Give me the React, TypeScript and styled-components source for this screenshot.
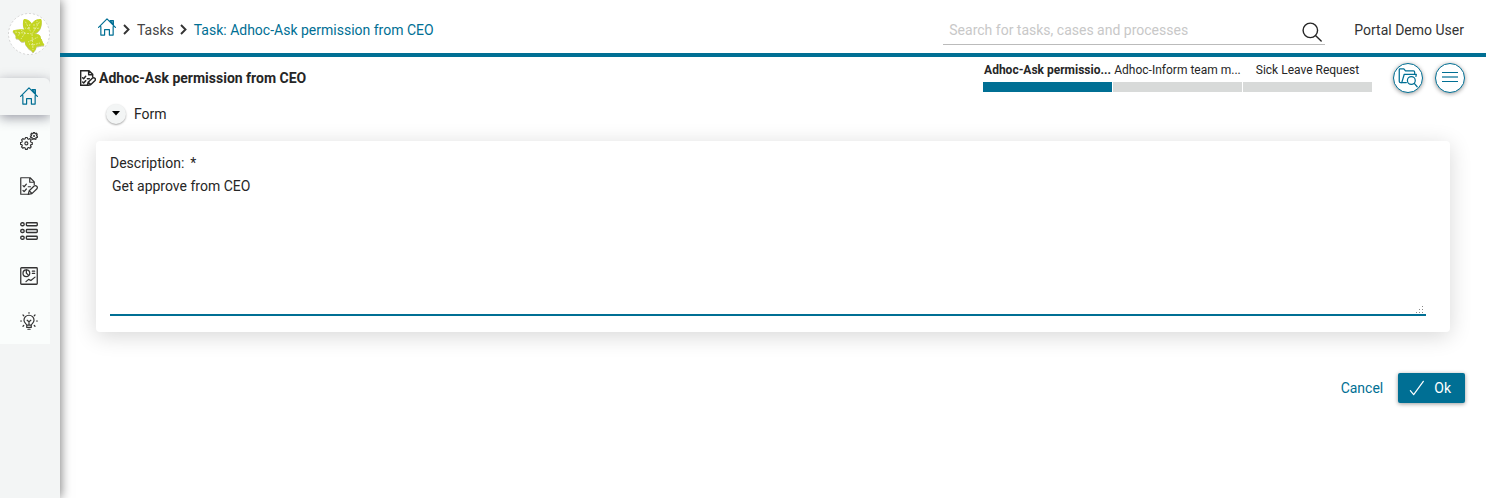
import React from "react";
import styled, { createGlobalStyle, css } from "styled-components";

const color = {
  primary: "#006f94",
  text: "#262626",
  soft: "#f3f5f5",
  menu: "#fafdfc",
  step: "#d8dad9",
};

const GlobalStyle = createGlobalStyle`
  *, *::before, *::after { box-sizing: border-box; }
  body {
    margin: 0;
    background: #fff;
    color: ${color.text};
    font: 14px/20px Roboto, "Liberation Sans", sans-serif;
  }
  button, input, textarea { font: inherit; color: inherit; }
`;

const Layout = styled.div`
  display: flex;
  min-height: 100vh;
`;

const Sidebar = styled.aside`
  flex: none;
  width: 60px;
  background: ${color.soft};
  box-shadow: 1px 0 10px rgba(0, 0, 0, 0.5);
`;

const LogoLink = styled.a`
  display: block;
  width: 42px;
  height: 42px;
  margin: 13px 8px 23px;
`;

const Menu = styled.nav`
  display: flex;
  flex-direction: column;
  width: 50px;
  background: ${color.menu};
  border-top-right-radius: 6px;
`;

const MenuLink = styled.a<{ $active?: boolean }>`
  display: flex;
  align-items: center;
  justify-content: flex-end;
  height: 45px;
  padding: 0 12px 2px 0;
  color: #333;
  ${({ $active }) =>
    $active &&
    css`
      height: 37px;
      margin-bottom: 4px;
      color: ${color.primary};
      background: ${color.soft};
      border-top-right-radius: 6px;
      box-shadow: 0 3px 12px rgba(60, 60, 80, 0.5);
      clip-path: inset(-16px 0 -16px 0);
    `}
`;

const Page = styled.div`
  flex: 1;
  min-width: 0;
  position: relative;
`;

const TopBar = styled.header`
  display: flex;
  align-items: center;
  height: 57px;
  padding: 7px 22px 0 38px;
  border-bottom: 4px solid ${color.primary};
`;

const Breadcrumb = styled.nav`
  display: flex;
  align-items: center;
  flex: 1;
  gap: 5px;
`;

const Crumb = styled.a<{ $current?: boolean }>`
  display: flex;
  color: ${({ $current }) => ($current ? color.primary : "#444")};
  text-decoration: none;
`;

const HomeCrumb = styled(Crumb)`
  color: ${color.primary};
  padding: 0 1px 6px 0;
`;

const SearchBox = styled.div`
  display: flex;
  align-items: center;
  width: 382px;
  height: 30px;
  margin: 0 29px 0 16px;
  padding: 0 3px 0 6px;
  border-bottom: 1px solid #bbb;
`;

const SearchInput = styled.input`
  flex: 1;
  min-width: 0;
  padding: 0;
  border: 0;
  outline: 0;
  background: transparent;
  &::placeholder {
    color: #c8c8c8;
    opacity: 1;
  }
`;

const PlainButton = styled.button`
  display: flex;
  padding: 0;
  border: 0;
  background: none;
  cursor: pointer;
`;

const SearchButton = styled(PlainButton)`
  padding-top: 4px;
`;

const UserButton = styled(PlainButton)`
  color: #333;
`;

const TaskBar = styled.div`
  display: flex;
  align-items: center;
  height: 42px;
  padding: 0 21px 0 20px;
`;

const TaskTitle = styled.h1`
  display: flex;
  align-items: center;
  flex: 1;
  gap: 3px;
  margin: 0;
  font-size: 14px;
  font-weight: 700;
`;

const Steps = styled.ol`
  display: grid;
  grid-template-columns: repeat(3, 129px);
  gap: 1px;
  margin: 0 21px 0 0;
  padding: 0 0 2px;
  list-style: none;
`;

const Step = styled.li<{ $active?: boolean }>`
  font-size: 12px;
  line-height: 16px;
  text-align: center;
  white-space: nowrap;
  font-weight: ${({ $active }) => ($active ? 700 : 400)};
  &::after {
    content: "";
    display: block;
    height: 10px;
    margin-top: 4px;
    background: ${({ $active }) => ($active ? color.primary : color.step)};
  }
`;

const RoundButton = styled.button`
  display: grid;
  place-items: center;
  width: 30px;
  height: 30px;
  padding: 0;
  color: ${color.primary};
  background: #fff;
  border: 1px solid ${color.primary};
  border-radius: 50%;
  box-shadow: 0 1px 4px rgba(0, 0, 0, 0.4);
  & + & {
    margin-left: 12px;
  }
`;

const FormSection = styled.form`
  padding: 4px 21px 20px 36px;
`;

const Legend = styled.div`
  display: flex;
  align-items: center;
  gap: 8px;
  padding-left: 10px;
  height: 22px;
`;

const Toggle = styled.button`
  display: grid;
  place-items: center;
  width: 20px;
  height: 20px;
  padding: 0 0 1px;
  background: ${color.soft};
  border: 0;
  border-radius: 50%;
  box-shadow: 0 1px 2px rgba(0, 0, 0, 0.35);
`;

const Card = styled.div`
  margin: 16px 15px 41px 0;
  padding: 12px 24px 16px 14px;
  background: #fff;
  border-radius: 4px;
  box-shadow: 0 4px 22px rgba(0, 0, 0, 0.16);
`;

const Label = styled.label`
  display: block;
`;

const Required = styled.span`
  margin-left: 6px;
`;

const AreaWrap = styled.div`
  position: relative;
  margin-top: 2px;
`;

const TextArea = styled.textarea`
  display: block;
  width: 100%;
  height: 141px;
  padding: 1px 2px;
  resize: none;
  border: 0;
  border-bottom: 2px solid ${color.primary};
  outline: 0;
  background: transparent;
`;

const Grip = styled.svg`
  position: absolute;
  right: 3px;
  bottom: 2px;
  fill: #888;
  pointer-events: none;
`;

const Actions = styled.div`
  display: flex;
  align-items: center;
  justify-content: flex-end;
  gap: 15px;
`;

const CancelLink = styled.a`
  color: ${color.primary};
  text-decoration: none;
`;

const OkButton = styled.button`
  display: flex;
  align-items: center;
  gap: 9px;
  height: 30px;
  padding: 0 14px 0 11px;
  color: #fff;
  background: ${color.primary};
  border: 0;
  border-radius: 2px;
  box-shadow: 0 1px 4px rgba(0, 0, 0, 0.4);
`;

const LineIcon = styled.svg.attrs({ viewBox: "0 0 24 24", "aria-hidden": true })<{ $weight?: number }>`
  flex: none;
  fill: none;
  stroke: currentColor;
  stroke-width: ${({ $weight }) => $weight ?? 1.6};
  stroke-linecap: round;
  stroke-linejoin: round;
`;

type IconProps = { size?: number; weight?: number };

const HomeIcon = ({ size = 18 }: IconProps) => (
  <LineIcon width={size} height={size}>
    <path d="M.8 12.400 12 1.200l11.200 11.200M3.800 11.500v11.300h5v-7.300h6.400v7.300h5V11.500" />
    <path d="M16 3.500h4.500V9z" fill="currentColor" fillOpacity="0.500" />
  </LineIcon>
);

const TaskIcon = ({ size = 18, weight }: IconProps) => (
  <LineIcon width={size} height={size} $weight={weight}>
    <path d="M10 23H1V1h12.500l5.500 5.500V10M13 1v6h6M4 11.500l1.500 1.500L8.500 9.500M4 18l1.500 1.500L8.500 16M11 13h3" />
    <path d="m12.300 18.300 6.500-6.300c2.500-1.500 5.500 1 3.800 3.700l-6.700 6.500-5 1zM12.300 18.300l3.500 3.500" />
  </LineIcon>
);

const cog = (cx: number, cy: number, inner: number, outer: number, teeth: number) => {
  const points: string[] = [];
  for (let i = 0; i < teeth; i++) {
    [[-0.32, inner], [-0.2, outer], [0.2, outer], [0.32, inner]].forEach(([offset, r]) => {
      const a = ((i + offset) * 2 * Math.PI) / teeth;
      points.push(`${(cx + r * Math.sin(a)).toFixed(2)} ${(cy - r * Math.cos(a)).toFixed(2)}`);
    });
  }
  return `M${points.join("L")}Z`;
};

const GearsIcon = () => (
  <LineIcon width={18} height={18} $weight={1.5}>
    <path d={cog(8.5, 15.2, 6.3, 8, 8)} />
    <circle cx="8.500" cy="15.200" r="2" />
    <path d={cog(18.7, 5.3, 3.5, 4.9, 7)} />
    <circle cx="18.700" cy="5.300" r="0.600" />
  </LineIcon>
);

const ListIcon = () => (
  <LineIcon width={18} height={18} $weight={1.8}>
    {[3, 12, 21].map((y) => (
      <React.Fragment key={y}>
        <rect x="1" y={y - 2} width="4.500" height="4" rx="1.800" />
        <rect x="8.500" y={y - 2} width="14.500" height="4" rx="1" />
      </React.Fragment>
    ))}
  </LineIcon>
);

const DashboardIcon = () => (
  <LineIcon width={18} height={18} $weight={1.7}>
    <rect x="1" y="1" width="22" height="22" rx="1" />
    <circle cx="8.500" cy="8.200" r="4.500" />
    <path d="M8.500 4v4.200l3 3M16.500 5.500h3M16.500 8.500h3M8 19.500l3.500-3 3 1.500 5.500-4.500" />
  </LineIcon>
);

const BulbIcon = () => (
  <LineIcon width={18} height={18}>
    <path d="M9 17.500c0-1.400-3.700-2.500-3.700-6.500a6.700 6.700 0 0 1 13.400 0c0 4-3.700 5.100-3.700 6.500zM9 17.500v3h6v-3M10.500 23h3M12 17v-4M9.500 11l2.500 2 2.500-2M12 .8v.7M4 4l1 1M20 4l-1 1M.8 12h1.200M22 12h1.200M4 19l1-1M20 19l-1-1" />
  </LineIcon>
);

const SearchIcon = () => (
  <LineIcon width={20} height={20} $weight={1.7}>
    <circle cx="10" cy="10" r="8.700" />
    <path d="m16.500 16.500 6.500 6.300" />
  </LineIcon>
);

const CaseIcon = () => (
  <LineIcon width={20} height={20} $weight={1.5}>
    <path d="M10 17.500H3C2 17.500 1.500 17 1.500 16V2c0-.6.400-1 1-1H7l2 2.500h9.500c1 0 1.500.5 1.500 1.500v1.500" />
    <path d="M4.500 17.500 7.500 7.500H22l-.5 2.500" />
    <circle cx="16" cy="15" r="4.700" />
    <path d="m19.500 18.500 3.500 4" />
  </LineIcon>
);

const MenuIcon = () => (
  <svg width="16" height="12" viewBox="0 0 16 12" fill="currentColor" aria-hidden="true">
    <rect y="0" width="16" height="1" />
    <rect y="4" width="16" height="2" opacity="0.600" />
    <rect y="9" width="16" height="1" />
  </svg>
);

const Chevron = () => (
  <svg width="10" height="14" viewBox="0 0 10 14" fill="none" stroke="#333" strokeWidth="1.900" aria-hidden="true">
    <path d="m2 2 4.500 4.500L2 11" />
  </svg>
);

const leaves = [
  { d: "M24 21C17 20 14 13 16 6.500c7 0 10 6 8 14.500Z", vein: "M24 21 17 8M21 16l-4-1M21 16l1-5" },
  { d: "M24 21C21 11 26 6 33 6.500c1 8-2 13-9 14.500Z", vein: "M24 21 32 8M26 16v-6M26 16l6-1M29 12V8" },
  { d: "M24 21C20 28 15 29 13 28 11 26 11 25 8 25c1-3-1-4-3-7 7-2 15-2 19 3Z", vein: "M24 21 7 19M17 20l-4 6M17 20l-4-3M12 20l-2 3" },
  { d: "M24 21c6 0 9 1 8 4 2 1 1 3 4 7-4 0-5 1-8 1 0 2-1 4-3 6-1-3-5-3-5-5-5-4-2-9 4-13Z", vein: "m24 21 1 16M24 27l-4 2M24 27l6-3M25 32l-4-1M25 32l7-2" },
];

const LeafLogo = () => (
  <svg width="42" height="42" viewBox="0 0 42 42" role="img" aria-label="Portal">
    <circle cx="21" cy="21" r="20.500" fill="#fff" stroke="#d5d5d5" strokeDasharray="2 2" />
    <g strokeLinejoin="round">
      {leaves.map(({ d }) => (
        <path key={d} d={d} fill="#c9ca9c" stroke="#c9ca9c" transform="translate(0 1)" />
      ))}
      {leaves.map(({ d, vein }) => (
        <React.Fragment key={d}>
          <path d={d} fill="#c3d520" stroke="#c3d520" />
          <path d={vein} fill="none" stroke="#e9efa5" strokeWidth="0.800" strokeDasharray="2 1" />
        </React.Fragment>
      ))}
    </g>
  </svg>
);

const menu = [
  { name: "Home", Icon: HomeIcon },
  { name: "Processes", Icon: GearsIcon },
  { name: "Tasks", Icon: TaskIcon },
  { name: "Cases", Icon: ListIcon },
  { name: "Dashboard", Icon: DashboardIcon },
  { name: "Ideas", Icon: BulbIcon },
];

const steps = ["Adhoc-Ask permissio...", "Adhoc-Inform team m...", "Sick Leave Request"];

export default function App() {
  return (
    <>
      <GlobalStyle />
      <Layout>
        <Sidebar>
          <LogoLink href="#">
            <LeafLogo />
          </LogoLink>
          <Menu aria-label="Main">
            {menu.map(({ name, Icon }, i) => (
              <MenuLink key={name} href="#" aria-label={name} $active={i === 0}>
                <Icon />
              </MenuLink>
            ))}
          </Menu>
        </Sidebar>
        <Page>
          <TopBar>
            <Breadcrumb aria-label="Breadcrumb">
              <HomeCrumb href="#" aria-label="Home">
                <HomeIcon />
              </HomeCrumb>
              <Chevron />
              <Crumb href="#">Tasks</Crumb>
              <Chevron />
              <Crumb href="#" $current>
                Task: Adhoc-Ask permission from CEO
              </Crumb>
            </Breadcrumb>
            <SearchBox>
              <SearchInput aria-label="Search" placeholder="Search for tasks, cases and processes" />
              <SearchButton type="button" aria-label="Search">
                <SearchIcon />
              </SearchButton>
            </SearchBox>
            <UserButton type="button">Portal Demo User</UserButton>
          </TopBar>
          <TaskBar>
            <TaskTitle>
              <TaskIcon size={16} weight={2.2} />
              Adhoc-Ask permission from CEO
            </TaskTitle>
            <Steps>
              {steps.map((step, i) => (
                <Step key={step} $active={i === 0}>
                  {step}
                </Step>
              ))}
            </Steps>
            <RoundButton type="button" aria-label="Case details">
              <CaseIcon />
            </RoundButton>
            <RoundButton type="button" aria-label="Actions">
              <MenuIcon />
            </RoundButton>
          </TaskBar>
          <FormSection onSubmit={(e) => e.preventDefault()}>
            <Legend>
              <Toggle type="button" aria-label="Toggle form">
                <svg width="8" height="5" viewBox="0 0 8 5" aria-hidden="true">
                  <path d="M0 0h8L4 4.500z" />
                </svg>
              </Toggle>
              Form
            </Legend>
            <Card>
              <Label htmlFor="description">
                Description:<Required>*</Required>
              </Label>
              <AreaWrap>
                <TextArea id="description" required defaultValue="Get approve from CEO" />
                <Grip width="8" height="8" viewBox="0 0 8 8" aria-hidden="true">
                  <path d="M7 0h1v1H7zM7 3h1v1H7zM4 3h1v1H4zM7 6h1v1H7zM4 6h1v1H4zM1 6h1v1H1z" />
                </Grip>
              </AreaWrap>
            </Card>
            <Actions>
              <CancelLink href="#">Cancel</CancelLink>
              <OkButton type="submit">
                <LineIcon width={16} height={16} $weight={1.8}>
                  <path d="m2 16 5 6L21.500 2" />
                </LineIcon>
                Ok
              </OkButton>
            </Actions>
          </FormSection>
        </Page>
      </Layout>
    </>
  );
}
